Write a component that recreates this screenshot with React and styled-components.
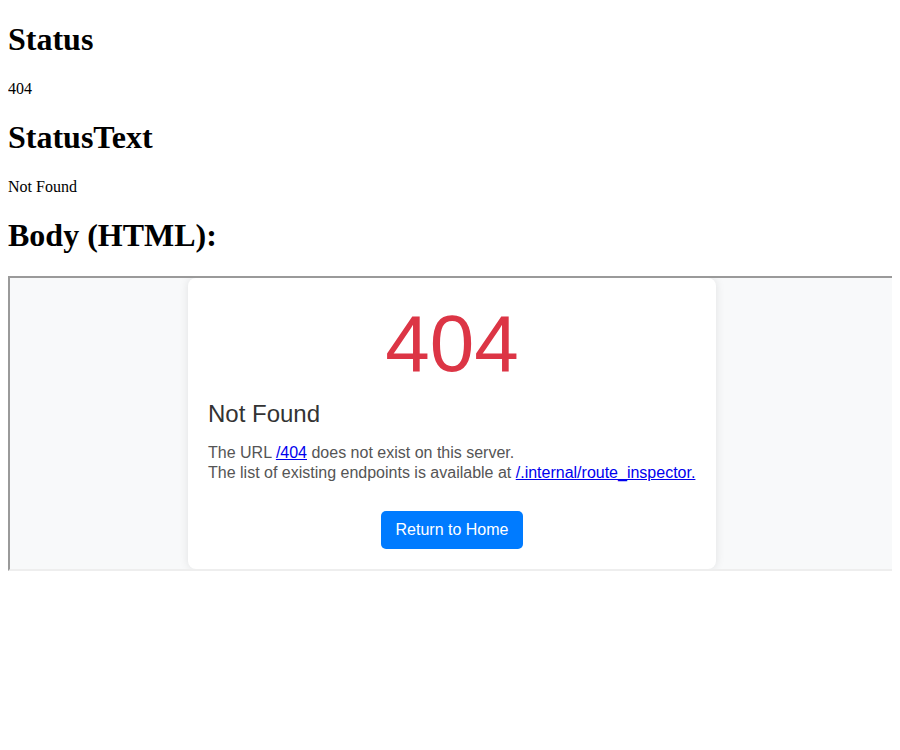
import styled, { createGlobalStyle } from 'styled-components'

const GlobalStyle = createGlobalStyle`
  body {
    margin: 0 8px 8px;
    font-family: "Liberation Serif", "Times New Roman", serif;
    color: #000000;
    background: #ffffff;
  }
`

const Heading = styled.h1`
  font-size: 32px;
  font-weight: bold;
  margin: 21.44px 0;
`

const Value = styled.p`
  font-size: 16px;
  margin: 16px 0;
`

const Frame = styled.div`
  width: 100%;
  height: 291px;
  display: flex;
  justify-content: center;
  background-color: #f8f9fa;
  border-style: solid;
  border-width: 2px;
  border-color: #9a9a9a #eeeeee #eeeeee #9a9a9a;
  overflow: hidden;
  font-family: "Liberation Sans", Arial, sans-serif;
`

const Card = styled.div`
  box-sizing: border-box;
  width: 528px;
  padding: 20px;
  background-color: #ffffff;
  border-radius: 8px;
  box-shadow: 0 0 10px rgba(0, 0, 0, 0.1);
`

const Code = styled.h1`
  margin: 0;
  font-size: 80px;
  font-weight: normal;
  line-height: 92px;
  color: #dc3545;
  text-align: center;
`

const Title = styled.h2`
  margin: 10px 0 0;
  font-size: 24px;
  font-weight: normal;
  line-height: 28px;
  color: #333333;
`

const Message = styled.p`
  margin: 15px 0 0;
  font-size: 16px;
  line-height: 20px;
  color: #555555;

  & > a {
    color: #0000ee;
    text-decoration: underline;
  }
`

const Actions = styled.div`
  display: flex;
  justify-content: center;
  margin-top: 28px;
`

const HomeButton = styled.a`
  display: inline-block;
  padding: 10px 15px;
  font-size: 16px;
  line-height: 18px;
  color: #ffffff;
  background-color: #007bff;
  border-radius: 5px;
  text-decoration: none;
`

const App = () => {
  return (
    <>
      <GlobalStyle />
      <Heading>Status</Heading>
      <Value>404</Value>
      <Heading>StatusText</Heading>
      <Value>Not Found</Value>
      <Heading>Body (HTML):</Heading>
      <Frame>
        <Card>
          <Code>404</Code>
          <Title>Not Found</Title>
          <Message>
            The URL <a href="#">/404</a> does not exist on this server.
            <br />
            The list of existing endpoints is available at{' '}
            <a href="#">/.internal/route_inspector.</a>
          </Message>
          <Actions>
            <HomeButton href="#">Return to Home</HomeButton>
          </Actions>
        </Card>
      </Frame>
    </>
  )
}

export default App
